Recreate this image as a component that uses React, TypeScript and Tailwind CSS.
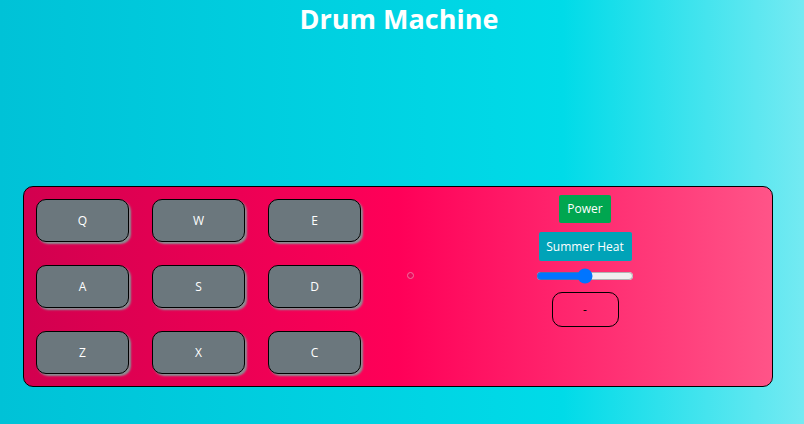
import { useState } from 'react';

const pads = ['Q', 'W', 'E', 'A', 'S', 'D', 'Z', 'X', 'C'];

export default function App() {
  const [volume, setVolume] = useState(50);

  return (
    <div
      className="h-[424px] w-full overflow-hidden bg-[linear-gradient(to_right,#00c2d7_0%,#00dbe8_70%,#74eaf2_100%)]"
      style={{ fontFamily: '"Open Sans", "Noto Sans", sans-serif' }}
    >
      <h1 className="pr-[6px] pt-[1px] text-center text-[27px] font-bold leading-[36px] text-white">
        Drum Machine
      </h1>

      {/* Machine panel */}
      <div className="ml-[23px] mt-[149px] flex h-[201px] w-[750px] items-start rounded-[10px] border border-black bg-[linear-gradient(to_right,#d2004f_0%,#ff0058_50%,#ff5488_100%)]">
        <div className="ml-[12px] mt-[12px] grid grid-cols-[repeat(3,93px)] gap-x-[23px] gap-y-[23px]">
          {pads.map((key) => (
            <button
              key={key}
              className="flex h-[43px] items-center justify-center rounded-[10px] border border-black bg-[#6b777d] text-[12px] text-white shadow-[2px_2px_2px_#8a8f93]"
            >
              {key}
            </button>
          ))}
        </div>

        <div className="ml-[46px] mt-[85px] h-[7px] w-[7px] rounded-full border border-[#f2739f] bg-[#e80a5c]" />

        <div className="ml-[121px] mt-[8px] flex w-[100px] flex-col items-center">
          <button className="h-[28px] w-[52px] rounded-[2px] bg-[#00a650] text-[12px] text-white">
            Power
          </button>
          <div className="mt-[9px] flex h-[29px] w-[93px] items-center justify-center rounded-[2px] bg-[#00a3b8] text-[12px] text-white">
            Summer Heat
          </div>
          <input
            type="range"
            min={0}
            max={100}
            value={volume}
            onChange={(e) => setVolume(Number(e.target.value))}
            className="mt-[7px] h-[16px] w-[98px] accent-[#0075ff]"
          />
          <div className="mt-[8px] flex h-[35px] w-[67px] items-center justify-center rounded-[10px] border border-black text-[12px] text-black">
            -
          </div>
        </div>
      </div>
    </div>
  );
}
